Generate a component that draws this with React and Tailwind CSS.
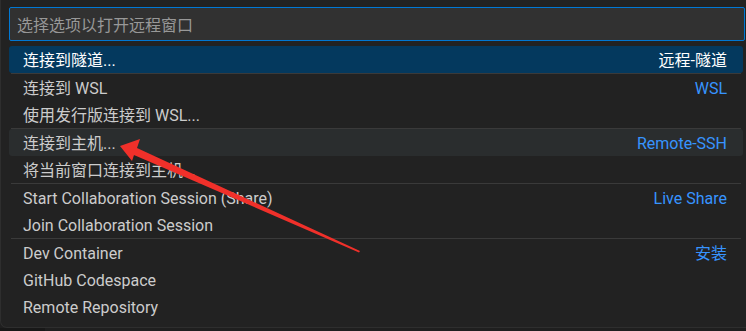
import React from "react";

const font = { fontFamily: '"Roboto", "Noto Sans CJK SC", sans-serif' };

function Row({ label, right, selected, hover, sep }) {
  return (
    <div className={sep ? "border-t border-[#3a3a3a] mx-[2px]" : "mx-[2px]"}>
      <div
        className={
          "h-[27px] flex items-center justify-between pt-[3px] pl-[14px] pr-[16px] rounded-[3px] -mx-[2px] " +
          (selected ? "bg-[#04395e] text-white" : hover ? "bg-[#2a2d2e] text-[#cccccc]" : "text-[#cccccc]")
        }
      >
        <span className="whitespace-nowrap">{label}</span>
        {right && (
          <span className={"whitespace-nowrap " + (selected ? "text-white" : "text-[#3794ff]")}>{right}</span>
        )}
      </div>
    </div>
  );
}

export default function App() {
  return (
    <div className="relative w-[746px] h-[331px] overflow-hidden bg-[#1f1f1f] text-[16px] leading-none" style={font}>
      <div className="w-[760px] h-[328px] bg-[#222222] rounded-b-[7px] border-l border-b border-[#2e2e2e] pt-[7px] pl-[8px]">
        <div className="w-[736px] h-[34px] bg-[#313131] border border-[#0078d4] rounded-[2px] flex items-center pt-[3px] pl-[7px] text-[#989898]">
          选择选项以打开远程窗口
        </div>
        <div className="w-[734px] mt-[5px]">
          <Row label="连接到隧道..." right="远程-隧道" selected />
          <Row label="连接到 WSL" right="WSL" sep />
          <Row label="使用发行版连接到 WSL..." />
          <Row label="连接到主机..." right="Remote-SSH" hover sep />
          <Row label="将当前窗口连接到主机..." />
          <Row label="Start Collaboration Session (Share)" right="Live Share" sep />
          <Row label="Join Collaboration Session" />
          <Row label="Dev Container" right="安装" sep />
          <Row label="GitHub Codespace" />
          <Row label="Remote Repository" />
        </div>
      </div>
      <div className="absolute left-0 top-[328px] w-[45px] h-[3px] bg-[#181818]" />
      <svg className="absolute left-0 top-0 pointer-events-none" width="746" height="331" viewBox="0 0 746 331">
        <polygon points="120,146 140,139 137,148 360,251 359,252.5 134,155 132,161" fill="#f0302a" />
      </svg>
    </div>
  );
}
